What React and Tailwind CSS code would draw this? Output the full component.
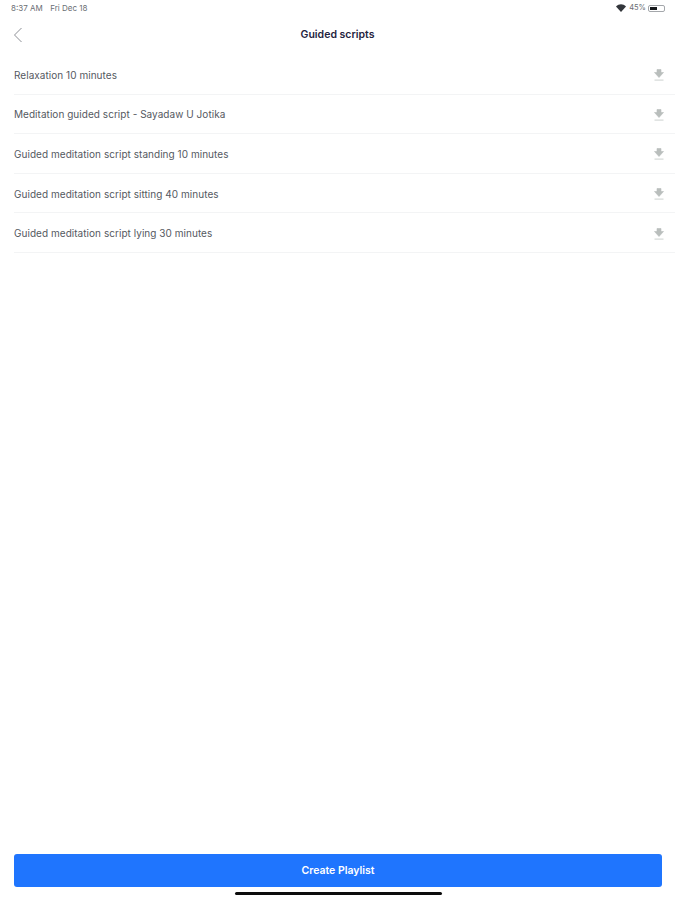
const scripts = [
  'Relaxation 10 minutes',
  'Meditation guided script - Sayadaw U Jotika',
  'Guided meditation script standing 10 minutes',
  'Guided meditation script sitting 40 minutes',
  'Guided meditation script lying 30 minutes',
]

function DownloadIcon() {
  return (
    <svg width="10" height="12" viewBox="0 0 10 12" className="shrink-0">
      <path d="M3 0.5h4v3h2.5L5 8.5 0.5 3.5H3z" fill="#b9bebc" stroke="#b9bebc" strokeWidth="0.6" strokeLinejoin="round" />
      <rect x="0.5" y="10.5" width="9" height="1.2" fill="#d5d9d7" />
    </svg>
  )
}

function StatusBar() {
  return (
    <div className="flex h-[16px] items-center justify-between pl-[11px] pr-[10px] text-[8px] text-[#6a6e74]">
      <div className="flex gap-[7.5px]">
        <span>8:37 AM</span>
        <span>Fri Dec 18</span>
      </div>
      <div className="flex items-center gap-[2px]">
        <svg width="10" height="8" viewBox="0 0 10 8">
          <path d="M0 2.5C3 -0.5 7 -0.5 10 2.5L5 8z" fill="#33363b" />
        </svg>
        <span className="ml-[1px] text-[7.5px]">45%</span>
        <div className="flex h-[7px] w-[17px] rounded-[2px] border border-[#a4a7ab] p-[1px]">
          <div className="h-full w-[7px] bg-[#16181b]" />
        </div>
      </div>
    </div>
  )
}

export default function App() {
  return (
    <div className="flex h-[900px] w-[675px] flex-col bg-white font-['Inter',sans-serif]">
      <StatusBar />
      <div className="relative flex h-[37px] items-center justify-center">
        <svg width="10" height="16" viewBox="0 0 10 16" className="absolute left-[13px] top-[11px]">
          <path d="M8.5 1L1.5 8l7 7" fill="none" stroke="#8d9096" strokeWidth="1" />
        </svg>
        <h1 className="text-[10.5px] font-semibold text-[#1f2340]">Guided scripts</h1>
      </div>
      <ul className="ml-[14px] mt-[2px]">
        {scripts.map((title) => (
          <li key={title} className="flex h-[39.6px] items-center justify-between border-b border-[#f3f4f5] pr-[11px] pt-[2px]">
            <span className="text-[10px] tracking-[0.04px] text-[#55595f]">{title}</span>
            <DownloadIcon />
          </li>
        ))}
      </ul>
      <div className="mt-auto pl-[14px] pr-[13px]">
        <button className="h-[33px] w-full rounded-[3px] bg-[#1f75fe] pt-[1px] text-[10.5px] font-semibold text-white">
          Create Playlist
        </button>
      </div>
      <div className="mb-[5px] ml-[235px] mt-[5px] h-[3px] w-[207px] rounded-full bg-[#0c0c0c]" />
    </div>
  )
}
